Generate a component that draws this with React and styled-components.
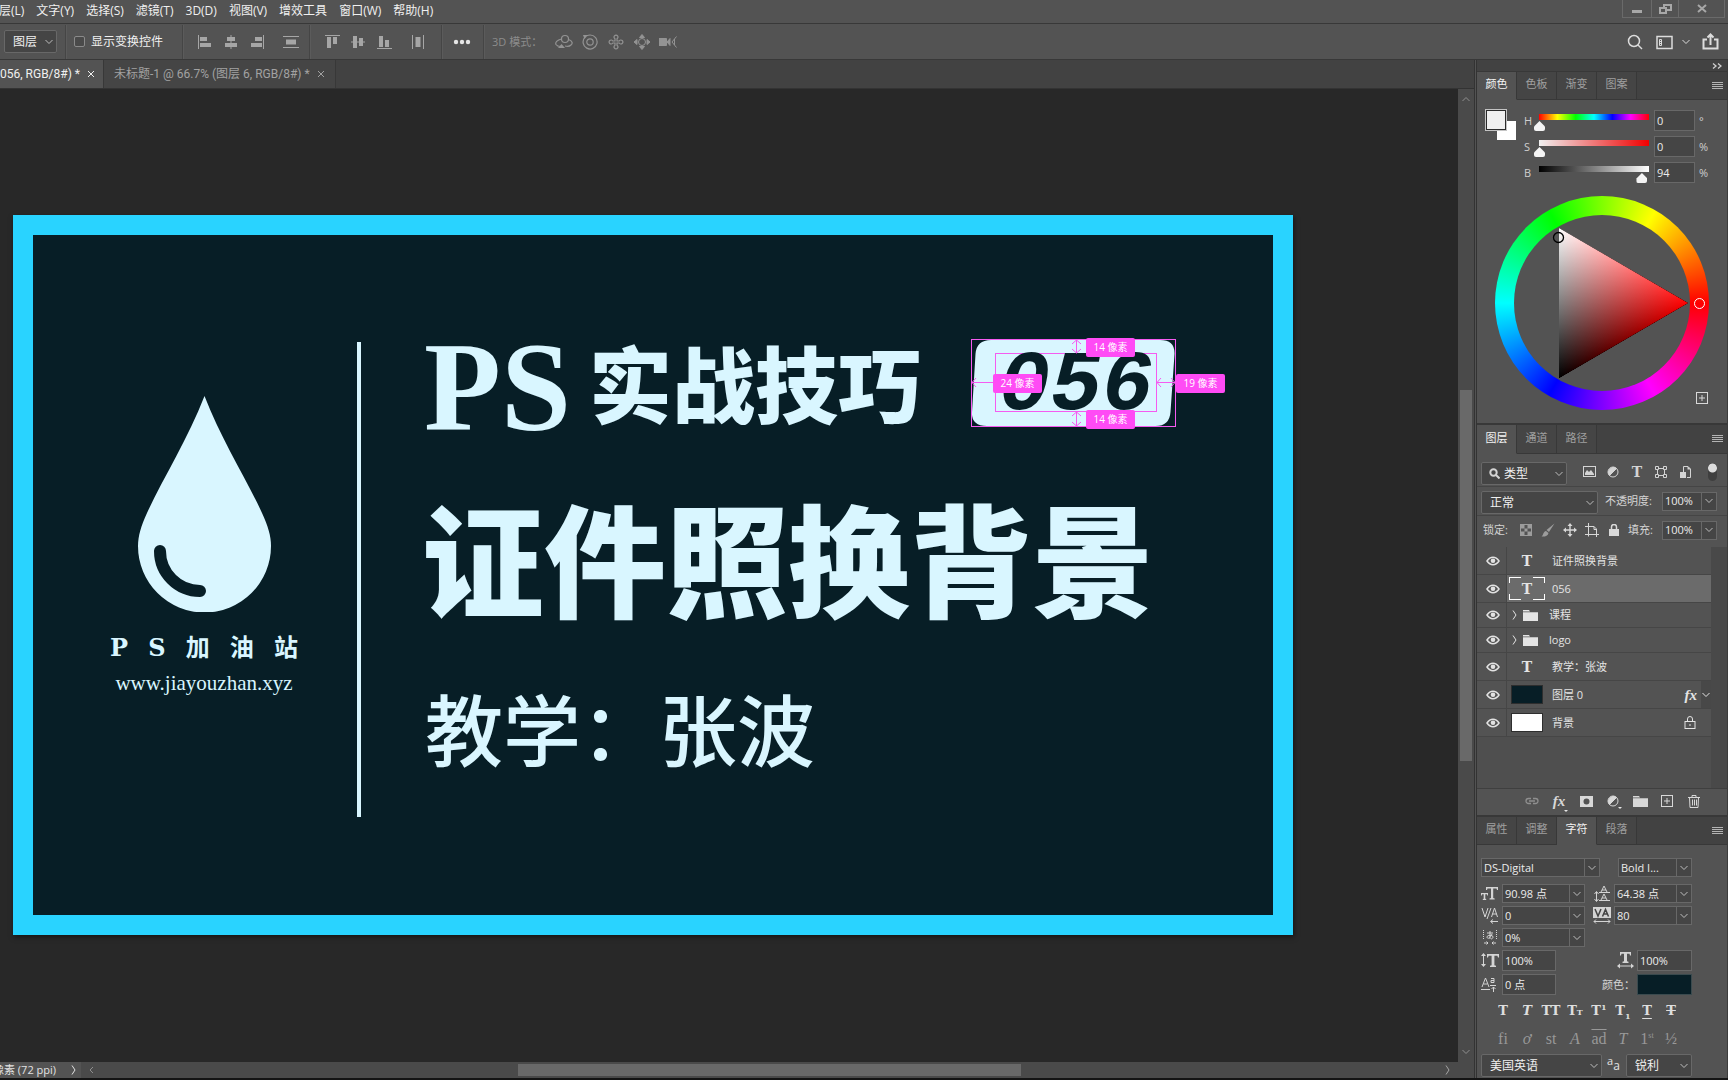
import React from 'react';
import styled, { createGlobalStyle, css } from 'styled-components';

const Global = createGlobalStyle`
  *, *::before, *::after { box-sizing: border-box; }
  body { margin: 0; background: #141414; overflow: hidden; }
  body, button, input, select {
    font-family: "Open Sans", "Noto Sans CJK SC", sans-serif;
    font-size: 11px;
    line-height: 16px;
    color: #e2e2e2;
  }
  button { background: none; border: 0; padding: 0; margin: 0; }
  input, select { margin: 0; outline: none; border-radius: 0; }
  svg { display: block; flex: none; }
`;

/* ---------- shell ---------- */

const Shell = styled.div`
  display: flex;
  flex-direction: column;
  height: 100vh;
  border-bottom: 2px solid #141414;
  background: #535353;
  overflow: hidden;
`;

const MenuBar = styled.header`
  display: flex;
  justify-content: space-between;
  height: 24px;
  flex: none;
  border-bottom: 1px solid #383838;
`;

const Menus = styled.nav`
  display: flex;
  align-items: flex-start;
  gap: 12px;
  padding-top: 3px;
  margin-left: -1px;
`;

const MenuItem = styled.button`
  font-size: 12px;
  color: #f0f0f0;
  white-space: nowrap;
`;

const WindowButtons = styled.div`
  display: flex;
  height: 18px;
  margin-right: 3px;
  border: 1px solid #6a6a6a;
  border-top: 0;
`;

const WindowButton = styled.button`
  display: grid;
  place-items: center;
  width: ${(p) => p.$w}px;
  color: #a8a8a8;
  & + & { border-left: 1px solid #6a6a6a; }
`;

const OptionsBar = styled.div`
  display: flex;
  align-items: center;
  height: 36px;
  flex: none;
  padding: 0 9px 0 4px;
  border-bottom: 1px solid #383838;
`;

const Separator = styled.i`
  width: 1px;
  height: 34px;
  flex: none;
  background: #454545;
  box-shadow: 1px 0 #5b5b5b;
`;

const CheckLabel = styled.label`
  display: flex;
  align-items: center;
  gap: 6px;
  padding: 0 19px 0 8px;
  font-size: 12px;
  color: #f0f0f0;
  white-space: nowrap;
`;

const CheckBox = styled.input`
  appearance: none;
  width: 11px;
  height: 11px;
  border: 1px solid #8a8a8a;
  border-radius: 2px;
  background: #4a4a4a;
`;

const IconGroup = styled.div`
  display: flex;
  align-items: center;
  gap: ${(p) => p.$gap || 0}px;
  padding: 0 ${(p) => p.$right || 0}px 0 ${(p) => p.$left || 0}px;
  color: ${(p) => p.$color || '#a6a6a6'};
`;

const IconButton = styled.button`
  display: grid;
  place-items: center;
  width: ${(p) => p.$w || 16}px;
  height: ${(p) => p.$h || 16}px;
  flex: none;
  color: ${(p) => p.$color || 'inherit'};
`;

const ModeLabel = styled.span`
  padding-left: 8px;
  color: #8c8c8c;
  white-space: nowrap;
`;

const Spacer = styled.span`flex: 1;`;

const Body = styled.div`
  display: flex;
  flex: 1;
  min-height: 0;
`;

/* ---------- form parts ---------- */

const SelectWrap = styled.label`
  position: relative;
  display: block;
  width: ${(p) => p.$w}px;
  height: ${(p) => p.$h || 23}px;
  flex: none;
  ${(p) => p.$low && css`
    align-self: flex-end;
    margin-bottom: 1px;
  `}
`;

const SelectBox = styled.select`
  appearance: none;
  width: 100%;
  height: 100%;
  padding: 0 16px 0 ${(p) => p.$pad || 8}px;
  border: 1px solid #686868;
  border-radius: 2px;
  background: #454545;
  font-size: 12px;
  color: #f0f0f0;
`;

const SelectArrow = styled.span`
  position: absolute;
  right: 4px;
  top: calc(50% - 3px);
  color: #bdbdbd;
  pointer-events: none;
`;

const SearchMark = styled.span`
  position: absolute;
  left: 8px;
  top: 6px;
  pointer-events: none;
`;

const Combo = styled.span`
  display: flex;
  width: ${(p) => p.$w}px;
  height: ${(p) => p.$h || 19}px;
  flex: none;
  border: 1px solid #686868;
  background: #454545;
`;

const TextInput = styled.input`
  flex: 1;
  min-width: 0;
  padding: 0 2px;
  border: 0;
  background: transparent;
  color: #ececec;
`;

const ComboArrow = styled.button`
  display: grid;
  place-items: center;
  width: 15px;
  border-left: 1px solid #686868;
  color: #bdbdbd;
`;

/* ---------- document area ---------- */

const Workspace = styled.main`
  display: flex;
  flex-direction: column;
  flex: 1;
  min-width: 0;
`;

const DocTabs = styled.div`
  display: flex;
  height: 29px;
  flex: none;
  background: #424242;
  border-bottom: 1px solid #333;
`;

const DocTab = styled.button`
  display: flex;
  align-items: center;
  gap: 7px;
  padding: 0 ${(p) => (p.$active ? 8 : 10)}px 0 ${(p) => (p.$active ? 0 : 10)}px;
  border-right: 1px solid #383838;
  background: ${(p) => (p.$active ? '#535353' : '#454545')};
  color: ${(p) => (p.$active ? '#f0f0f0' : '#a2a2a2')};
  font-family: Roboto, "Noto Sans CJK SC", sans-serif;
  font-size: 12px;
  white-space: nowrap;
`;

const CanvasRow = styled.div`
  display: flex;
  flex: 1;
  min-height: 0;
`;

const Canvas = styled.div`
  flex: 1;
  min-width: 0;
  padding: 126px 0 0 13px;
  background: #282828;
  overflow: hidden;
`;

const VScroll = styled.div`
  display: flex;
  flex-direction: column;
  align-items: center;
  justify-content: space-between;
  width: 16px;
  flex: none;
  padding: 7px 0;
  background: #4a4a4a;
  color: #8f8f8f;
`;

const VThumb = styled.i`
  width: 12px;
  flex: 0 0 371px;
  background: #696969;
`;

const FlexGap = styled.i`flex: 1 1 0;`;

const StatusBar = styled.footer`
  display: flex;
  align-items: center;
  height: 16px;
  flex: none;
  background: #4a4a4a;
  color: #8f8f8f;
  overflow: hidden;
`;

const StatusText = styled.span`
  display: flex;
  align-items: center;
  gap: 15px;
  width: 88px;
  height: 16px;
  flex: none;
  margin: 0 8px 0 -7px;
  background: #535353;
  color: #e2e2e2;
  white-space: nowrap;
`;

const HThumb = styled.i`
  height: 12px;
  flex: 0 0 503px;
  background: #696969;
`;

const Artboard = styled.section`
  display: flex;
  align-items: flex-start;
  width: 1280px;
  height: 720px;
  border: 20px solid #29d3ff;
  padding-left: 77px;
  background: #071e26;
  color: #d9f6ff;
  box-shadow: 1px 2px 5px rgba(0, 0, 0, 0.5);
`;

const Brand = styled.div`
  display: flex;
  flex-direction: column;
  align-items: center;
  width: 188px;
  padding-top: 161px;
`;

const BrandName = styled.div`
  display: flex;
  justify-content: space-between;
  align-items: center;
  width: 100%;
  height: 30px;
  margin-top: 21px;
  font: bold 24px/30px "DejaVu Serif", "Noto Sans CJK SC", serif;
`;

const BrandUrl = styled.div`
  margin-top: 8px;
  font: 21px/24px "Liberation Serif", serif;
`;

const Rule = styled.i`
  width: 4px;
  height: 475px;
  margin: 107px 63px 0 59px;
  background: #d9f6ff;
`;

const Titles = styled.div`
  padding-top: 90px;
  white-space: nowrap;
`;

const TitleLine = styled.div`
  display: flex;
  align-items: center;
  height: 120px;
`;

const Latin = styled.span`
  margin: 6px 18px 0 0;
  font: bold 126px/120px "Liberation Serif", serif;
`;

const Hanzi = styled.span`
  margin-bottom: 8px;
  font: 900 83px/110px "Noto Sans CJK SC", sans-serif;
`;

const Headline = styled.h1`
  margin: 35px 0 0 -2px;
  font: 900 122px/150px "Noto Sans CJK SC", sans-serif;
`;

const Teacher = styled.p`
  margin: 57px 0 0 1px;
  font: 500 78px/80px "Noto Sans CJK SC", sans-serif;
`;

/* ---------- number badge with its measuring guides ---------- */

const Badge = styled.div`
  position: relative;
  width: 205px;
  height: 88px;
  margin: 0 0 4px 50px;
  outline: 1px solid #f55bf0;
  outline-offset: -1px;
  color: #071e26;
`;

const BadgePlate = styled.svg`
  position: absolute;
  inset: 0;
`;

const BadgeNumber = styled.span`
  position: absolute;
  left: 24px;
  right: 19px;
  top: 14px;
  bottom: 15px;
  border: 1px solid #f55bf0;
  text-align: center;
  font: italic bold 86px/65px "Liberation Mono", monospace;
`;

const Measure = styled.span`
  position: absolute;
  left: ${(p) => p.$x}px;
  top: ${(p) => p.$y}px;
  width: 49px;
  height: 19px;
  border-radius: 2px;
  background: #ff4bf5;
  color: #fff;
  font-size: 10px;
  line-height: 19px;
  text-align: center;
`;

/* ---------- dock ---------- */

const Dock = styled.aside`
  display: flex;
  flex-direction: column;
  width: 254px;
  flex: none;
  border-left: 3px double #333;
  border-right: 1px solid #3c3c3c;
`;

const Collapse = styled.div`
  display: flex;
  justify-content: flex-end;
  align-items: center;
  height: 12px;
  flex: none;
  padding-right: 5px;
  background: #424242;
  border-bottom: 1px solid #383838;
  color: #d0d0d0;
`;

const PanelTabs = styled.div`
  display: flex;
  height: ${(p) => p.$h || 28}px;
  flex: none;
  background: #424242;
  border-top: ${(p) => (p.$line ? 2 : 0)}px solid #383838;
`;

const PanelTab = styled.button`
  width: 40px;
  border-right: 1px solid #383838;
  border-bottom: 1px solid ${(p) => (p.$active ? '#535353' : '#383838')};
  background: ${(p) => (p.$active ? '#535353' : '#454545')};
  color: ${(p) => (p.$active ? '#f4f4f4' : '#a0a0a0')};
  padding-bottom: 3px;
`;

const PanelMenu = styled.button`
  display: flex;
  flex: 1;
  align-items: center;
  justify-content: flex-end;
  padding-right: 4px;
  border-bottom: 1px solid #383838;
  color: #b4b4b4;
`;

const ColorPanel = styled.section`
  flex: none;
  padding: 10px 0 13px;
`;

const ColorControls = styled.div`
  display: flex;
  padding-left: 9px;
`;

const Swatches = styled.div`
  position: relative;
  width: 38px;
  height: 31px;
  flex: none;
`;

const Swatch = styled.button`
  position: absolute;
  left: ${(p) => (p.$back ? 11 : 0)}px;
  top: ${(p) => (p.$back ? 11 : 0)}px;
  width: ${(p) => (p.$back ? 19 : 20)}px;
  height: ${(p) => (p.$back ? 19 : 20)}px;
  border: ${(p) => (p.$back ? 'none' : '1px solid #2b2b2b')};
  background: ${(p) => (p.$back ? '#fff' : '#f0f0f0')};
  box-shadow: ${(p) => (p.$back ? 'none' : '0 0 0 1px #c4c4c4')};
`;

const Sliders = styled.div`
  display: grid;
  gap: 5px;
`;

const SliderRow = styled.div`
  display: flex;
  align-items: center;
  height: 21px;
`;

const SliderName = styled.label`
  width: 10px;
  color: #cfcfcf;
`;

const Range = styled.input`
  appearance: none;
  width: 120px;
  height: 21px;
  background: ${(p) => p.$track} 5px 4px / 110px 6px no-repeat;
  &::-webkit-slider-runnable-track { height: 21px; }
  &::-webkit-slider-thumb {
    appearance: none;
    width: 11px;
    height: 10px;
    margin-top: 11px;
    background: #f4f4f4;
    border-radius: 2px;
    clip-path: polygon(50% 0, 100% 55%, 100% 100%, 0 100%, 0 55%);
  }
`;

const Unit = styled.span`
  width: 20px;
  padding-left: 4px;
  color: #cfcfcf;
`;

const Wheel = styled.div`
  position: relative;
  display: grid;
  place-items: center;
  width: 214px;
  height: 214px;
  margin: 13px 0 0 18px;
  border-radius: 50%;
  background: conic-gradient(from 90deg, #f00, #f0f, #00f, #0ff, #0f0, #ff0, #f00);
`;

const WheelHole = styled.i`
  width: 176px;
  height: 176px;
  border-radius: 50%;
  background: #535353;
`;

const WheelDrawing = styled.svg`
  position: absolute;
  inset: 0;
  isolation: isolate;
`;

const AddSwatch = styled.button`
  position: absolute;
  left: 201px;
  top: 196px;
  color: #d8d8d8;
`;

const LayersPanel = styled.section`
  display: flex;
  flex-direction: column;
  flex: 1;
  min-height: 0;
`;

const ToolRow = styled.div`
  display: flex;
  align-items: center;
  height: ${(p) => p.$h}px;
  flex: none;
  padding: ${(p) => p.$top || 0}px 10px ${(p) => p.$bottom || 0}px 4px;
  border-bottom: ${(p) => (p.$last ? 0 : 1)}px solid #454545;
  color: #d4d4d4;
`;

const FieldLabel = styled.label`
  margin: 0 ${(p) => p.$right ?? 5}px 0 ${(p) => p.$left ?? 0}px;
  white-space: nowrap;
  color: #d4d4d4;
`;

const FilterToggle = styled.button`
  width: 9px;
  height: 18px;
  margin-left: auto;
  border-radius: 5px;
  background: radial-gradient(circle at 50% 5px, #dcdcdc 4px, #3f3f3f 5px);
`;

const LayerArea = styled.div`
  display: flex;
  flex: 1;
  min-height: 0;
  background: #4d4d4d;
  border-bottom: 1px solid #3f3f3f;
`;

const LayerList = styled.ul`
  flex: 1;
  margin: 0;
  padding: 0;
  list-style: none;
  background: #4f4f4f;
`;

const LayerTrack = styled.i`
  width: 16px;
  background: #494949;
`;

const LayerRow = styled.li`
  display: flex;
  align-items: center;
  height: ${(p) => (p.$folder ? 25 : 28)}px;
  border-bottom: 1px solid #464646;
  background: linear-gradient(90deg, #535353 29px, #464646 29px, #464646 30px, ${(p) => (p.$selected ? '#6b6b6b' : '#535353')} 30px);
  color: #e4e4e4;
`;

const EyeButton = styled.button`
  display: grid;
  place-items: center;
  width: 31px;
  height: 100%;
`;

const LayerIcon = styled.span`
  display: flex;
  align-items: center;
  gap: 4px;
  width: ${(p) => (p.$folder ? 41 : 44)}px;
  height: 100%;
  padding-left: ${(p) => (p.$inset ? 3 : 1)}px;
`;

const FolderToggle = styled.span`
  display: grid;
  place-items: center;
  width: 10px;
`;

const TypeMark = styled.span`
  display: grid;
  place-items: center;
  width: ${(p) => p.$w || 36}px;
  height: 23px;
  font: bold 14px/20px "DejaVu Serif", serif;
  ${(p) => p.$framed && css`
    background:
      linear-gradient(#fff, #fff) 0 0 / 12px 1px, linear-gradient(#fff, #fff) 100% 0 / 12px 1px,
      linear-gradient(#fff, #fff) 0 100% / 12px 1px, linear-gradient(#fff, #fff) 100% 100% / 12px 1px,
      linear-gradient(#fff, #fff) 0 0 / 1px 6px, linear-gradient(#fff, #fff) 100% 0 / 1px 6px,
      linear-gradient(#fff, #fff) 0 100% / 1px 6px, linear-gradient(#fff, #fff) 100% 100% / 1px 6px;
    background-repeat: no-repeat;
  `}
`;

const Thumb = styled.i`
  width: 32px;
  height: 19px;
  border: 1px solid #2e2e2e;
  background: ${(p) => p.$color};
`;

const LayerName = styled.span`
  flex: 1;
  white-space: nowrap;
`;

const FxMark = styled.span`
  font: italic bold 15px/16px "Liberation Serif", serif;
`;

const RowArrow = styled.button`
  display: grid;
  place-items: center;
  width: 10px;
  height: 100%;
  margin-left: 4px;
  background: #484848;
`;

const LayerFooter = styled.div`
  display: flex;
  align-items: center;
  height: 26px;
  flex: none;
  gap: 11px;
  padding: 0 26px 2px 47px;
  color: #d8d8d8;
`;

const DropMark = styled.span`
  position: relative;
  display: block;
  &::after {
    content: '';
    position: absolute;
    right: -3px;
    bottom: -2px;
    border: 2px solid transparent;
    border-top-color: #e6e6e6;
    border-bottom: 0;
  }
`;

const CharPanel = styled.section`
  flex: none;
  padding: 13px 35px 0 4px;
`;

const CharRow = styled.div`
  display: flex;
  align-items: center;
  justify-content: space-between;
  height: ${(p) => p.$h || 19}px;
  margin-bottom: ${(p) => p.$gap ?? 3}px;
`;

const CharField = styled.div`
  display: flex;
  align-items: center;
  gap: ${(p) => p.$gap ?? 3}px;
  color: #d4d4d4;
`;

const ColorChip = styled.button`
  width: 55px;
  height: 21px;
  border: 1px solid #3a4a4e;
  background: #071e26;
`;

const StyleGrid = styled.div`
  display: grid;
  grid-template-columns: repeat(8, 24px);
  height: 28px;
  padding-left: 10px;
`;

const StyleButton = styled.button`
  font-family: "DejaVu Serif", serif;
  font-size: 13px;
  font-weight: ${(p) => (p.$off ? 400 : 700)};
  font-style: ${(p) => (p.$italic ? 'italic' : 'normal')};
  text-decoration: ${(p) => p.$line || 'none'};
  text-underline-offset: 3px;
  color: ${(p) => (p.$off ? '#989898' : '#dedede')};
  white-space: nowrap;
  ${(p) => p.$off && css`font-family: "Liberation Serif", serif; font-size: 16px;`}
  sup, sub, small { font-size: 8px; line-height: 0; }
`;

const AaMark = styled.span`
  flex: 1;
  padding-left: 5px;
  font-size: 12px;
  sup { font-size: 11px; line-height: 0; }
`;

/* ---------- icons ---------- */

const Icon = ({ w = 16, h = 16, children, sw = 1, fill = 'none' }) => (
  <svg width={w} height={h} viewBox={`0 0 ${w} ${h}`} fill={fill} stroke={fill === 'none' ? 'currentColor' : 'none'} strokeWidth={sw} aria-hidden="true">
    {children}
  </svg>
);

const Chevron = () => <Icon w={8} h={6}><path d="M.500 1l3.500 3.500 3.500-3.500" /></Icon>;
const ChevronUp = () => <Icon w={8} h={6}><path d="M.500 5l3.500-3.500 3.500 3.500" /></Icon>;
const ChevronRight = () => <Icon w={5} h={10}><path d="M1 .500l3 4.500-3 4.500" /></Icon>;
const ChevronLeft = () => <Icon w={5} h={8}><path d="M4 1L1 4l3 3" /></Icon>;
const Close = () => <Icon w={8} h={8}><path d="M1 1l6 6M7 1L1 7" /></Icon>;
const Burger = () => <Icon w={11} h={8}><path d="M0 .5h11M0 2.500h11M0 4.500h11M0 6.500h11" /></Icon>;
const Eye = () => (
  <Icon w={14} h={10}>
    <path d="M1 5C3 2 5 1.200 7 1.200S11 2 13 5C11 8 9 8.800 7 8.800S3 8 1 5z" strokeWidth="1.500" />
    <circle cx="7" cy="4.800" r="2.300" fill="currentColor" stroke="none" />
  </Icon>
);
const Folder = () => <Icon w={15} h={12} fill="currentColor"><path d="M0 1h6l1 1.500H0zM0 3.200h15V12H0z" /></Icon>;
const Lock = () => <Icon w={12} h={13}><rect x="1" y="5.500" width="10" height="7" /><path d="M3.500 5.500V3a2.500 2.500 0 0 1 5 0v2.500M6 8v2" /></Icon>;
const HalfCircle = () => <Icon w={12} h={12}><circle cx="6" cy="6" r="5" /><path d="M9.500 2.500A5 5 0 0 0 2.500 9.500z" fill="currentColor" /></Icon>;
const PlusBox = () => <Icon w={12} h={12}><rect x=".5" y=".5" width="11" height="11" /><path d="M6 3v6M3 6h6" /></Icon>;

const alignIcons = {
  left: <path d="M1 1h1v14H1zM3 3h7v4H3zM3 9h11v4H3z" />,
  center: <path d="M7.500 1h1v14h-1zM4 3h8v4H4zM2 9h12v4H2z" />,
  right: <path d="M14 1h1v14h-1zM6 3h7v4H6zM2 9h11v4H2z" />,
  spreadV: <path d="M0 2h16v1H0zM3 5.500h10v5H3zM0 13h16v1H0z" />,
  top: <path d="M1 1h15v1H1zM3 3h4v11H3zM9 3h4v7H9z" />,
  middle: <path d="M1 7.500h14v1H1zM3 2h4v12H3zM9 4h4v8H9z" />,
  bottom: <path d="M1 14h15v1H1zM3 2h4v11H3zM9 6h4v7H9z" />,
  spreadH: <path d="M2 1h1v14H2zM5.500 3h5v10h-5zM13 1h1v14h-1z" />,
};

const Align = ({ kind }) => (
  <IconButton aria-label={kind}><Icon fill="currentColor">{alignIcons[kind]}</Icon></IconButton>
);

const Select = ({ label, value, w, h, pad, low }) => (
  <SelectWrap $w={w} $h={h} $low={low}>
    <SelectBox aria-label={label} defaultValue={value} $pad={pad}><option>{value}</option></SelectBox>
    <SelectArrow><Chevron /></SelectArrow>
  </SelectWrap>
);

const ComboField = ({ id, label, value, w, h, plain }) => (
  <Combo $w={w} $h={h}>
    <TextInput id={id} aria-label={label} defaultValue={value} />
    {!plain && <ComboArrow aria-label={label + ' ▾'}><Chevron /></ComboArrow>}
  </Combo>
);

const Tabs = ({ names, active, h, line }) => (
  <PanelTabs $h={h} $line={line} role="tablist">
    {names.map((n) => <PanelTab key={n} role="tab" aria-selected={n === active} $active={n === active}>{n}</PanelTab>)}
    <PanelMenu aria-label="menu"><Burger /></PanelMenu>
  </PanelTabs>
);

/* ---------- data ---------- */

const menus = ['层(L)', '文字(Y)', '选择(S)', '滤镜(T)', '3D(D)', '视图(V)', '增效工具', '窗口(W)', '帮助(H)'];

const hsb = [
  { name: 'H', value: 0, max: 360, unit: '°', track: 'linear-gradient(90deg,#f00,#ff0,#0f0,#0ff,#00f,#f0f,#f00)' },
  { name: 'S', value: 0, max: 100, unit: '%', track: 'linear-gradient(90deg,#f0f0f0,#f00000)' },
  { name: 'B', value: 94, max: 100, unit: '%', track: 'linear-gradient(90deg,#000,#fff)' },
];

const layers = [
  { name: '证件照换背景', type: 'text' },
  { name: '056', type: 'text', selected: true },
  { name: '课程', type: 'folder' },
  { name: 'logo', type: 'folder' },
  { name: '教学：张波', type: 'text' },
  { name: '图层 0', type: 'pixel', color: '#071e26', fx: true },
  { name: '背景', type: 'pixel', color: '#fff', locked: true },
];

/* ---------- sections ---------- */

function Options() {
  return (
    <OptionsBar>
      <Select label="自动选择" value="图层" w={53} />
      <IconGroup $left={8}><Separator /></IconGroup>
      <CheckLabel><CheckBox type="checkbox" />显示变换控件</CheckLabel>
      <Separator />
      <IconGroup $gap={10} $left={14} $right={10}>
        <Align kind="left" /><Align kind="center" /><Align kind="right" />
        <IconGroup $left={8}><Align kind="spreadV" /></IconGroup>
      </IconGroup>
      <Separator />
      <IconGroup $gap={10} $left={14} $right={15}>
        <Align kind="top" /><Align kind="middle" /><Align kind="bottom" />
        <IconGroup $left={8}><Align kind="spreadH" /></IconGroup>
      </IconGroup>
      <Separator />
      <IconGroup $left={11} $right={12} $color="#e6e6e6">
        <IconButton aria-label="more" $w={18}><Icon w={18} fill="currentColor"><circle cx="3" cy="8" r="2.200" /><circle cx="9" cy="8" r="2.200" /><circle cx="15" cy="8" r="2.200" /></Icon></IconButton>
      </IconGroup>
      <Separator />
      <ModeLabel>3D 模式：</ModeLabel>
      <IconGroup $gap={8} $left={13} $color="#939393">
        <IconButton $w={18} aria-label="orbit"><Icon w={18} sw={1.2}><circle cx="10" cy="5" r="3.500" /><path d="M6.500 5C2 6 0 8.500 1 10.500c1 1.500 3 2 4.500 2M13.500 5.500c4 1.500 4.500 4 2.500 5.500-1.500 1.500-4 1.500-6 1" /><path d="M3 14h7l-3.500-4z" fill="currentColor" stroke="none" /></Icon></IconButton>
        <IconButton $w={18} aria-label="roll"><Icon w={18} sw={1.2}><circle cx="9" cy="8" r="3.200" /><path d="M4 3.200A7 7 0 1 0 9 1c-1.200 0-2.200.300-3 .8" /><path d="M2 1l5 0-3.500 4z" fill="currentColor" stroke="none" /></Icon></IconButton>
        <IconButton $w={18} aria-label="pan"><Icon w={18} sw={1.2}><path d="M8 7V4.800a2 2 0 1 1 2 0V7h2.200a2 2 0 1 1 0 2H10v2.200a2 2 0 1 1-2 0V9H5.800a2 2 0 1 1 0-2z" /></Icon></IconButton>
        <IconButton $w={18} aria-label="slide"><Icon w={18}><circle cx="9" cy="8" r="3.500" /><path d="M9 .500l2.500 3h-5zM9 15.500l2.500-3h-5zM1 8l3-2.500v5zM17 8l-3-2.500v5z" fill="currentColor" /></Icon></IconButton>
        <IconButton $w={18} aria-label="camera"><Icon w={18}><path d="M0 4.500h7.500v7H0zM8 8l3-3.500v7z" fill="currentColor" /><path d="M17.500 2.500L13 8l4.500 5.500M15.500 5v6" /></Icon></IconButton>
      </IconGroup>
      <Spacer />
      <IconGroup $gap={12} $color="#dcdcdc">
        <IconButton aria-label="search"><Icon sw={1.5}><circle cx="7" cy="7" r="5.500" /><path d="M11 11l4 4" /></Icon></IconButton>
        <IconGroup $gap={9} $left={1} $color="#dcdcdc">
          <IconButton aria-label="workspace" $w={17}><Icon w={17}><rect x="1" y="2.500" width="15" height="12" strokeWidth="1.500" /><path d="M3.500 5.500h2v6h-2zM3.500 7.500h2M3.500 9.500h2" /></Icon></IconButton>
          <Chevron />
        </IconGroup>
        <IconButton aria-label="share" $w={17} $h={17}><Icon w={17} h={17} sw={2}><path d="M5 6.500H1.500v9h14v-9H12M8.500 12V2M5.500 4.500l3-3 3 3" /></Icon></IconButton>
      </IconGroup>
    </OptionsBar>
  );
}

function Document() {
  return (
    <Artboard>
      <Brand>
        <svg width="133" height="216" viewBox="0 0 133 216">
          <path d="M66.500 0C83 43 109 84 124 117c6 13 9 23 9 33a66.500 66.500 0 0 1-133 0c0-10 3-20 9-33C24 84 50 43 66.500 0z" fill="#d9f6ff" />
          <path d="M22 155a40 40 0 0 0 40 40" fill="none" stroke="#071e26" strokeWidth="12" strokeLinecap="round" />
        </svg>
        <BrandName>{[...'PS加油站'].map((c) => <span key={c}>{c}</span>)}</BrandName>
        <BrandUrl>www.jiayouzhan.xyz</BrandUrl>
      </Brand>
      <Rule />
      <Titles>
        <TitleLine>
          <Latin>PS</Latin>
          <Hanzi>实战技巧</Hanzi>
          <Badge>
            <BadgePlate width="205" height="88" viewBox="0 0 205 88">
              <path d="M20 1h169q15 0 14.500 14l-4 58q-1 14-15 14H16Q0 87 1 73l3.500-58Q5.500 1 20 1z" fill="#d9f6ff" />
            </BadgePlate>
            <BadgeNumber>056</BadgeNumber>
            <BadgePlate width="205" height="88" viewBox="0 0 205 88" fill="none" stroke="#f55bf0">
              <path d="M105.500 1v13M101 5l4.500-4 4.500 4M101 10l4.500 4 4.500-4" />
              <path d="M105.500 73v14M101 77l4.500-4 4.500 4M101 83l4.500 4 4.500-4" />
              <path d="M1 43.500h22M5 39l-4 4.500 4 4.500" />
              <path d="M186 43.500h18M190 39l-4 4.500 4 4.500M200 39l4 4.500-4 4.500" />
            </BadgePlate>
            <Measure $x={115} $y={-1}>14 像素</Measure>
            <Measure $x={22} $y={35}>24 像素</Measure>
            <Measure $x={205} $y={35}>19 像素</Measure>
            <Measure $x={115} $y={71}>14 像素</Measure>
          </Badge>
        </TitleLine>
        <Headline>证件照换背景</Headline>
        <Teacher>教学：张波</Teacher>
      </Titles>
    </Artboard>
  );
}

function ColorSection() {
  return (
    <ColorPanel>
      <ColorControls>
        <Swatches><Swatch $back aria-label="背景色" /><Swatch aria-label="前景色" /></Swatches>
        <Sliders>
          {hsb.map((s) => (
            <SliderRow key={s.name}>
              <SliderName htmlFor={'r' + s.name}>{s.name}</SliderName>
              <Range id={'r' + s.name} type="range" min="0" max={s.max} defaultValue={s.value} $track={s.track} />
              <ComboField label={s.name} value={String(s.value)} w={41} h={21} plain />
              <Unit>{s.unit}</Unit>
            </SliderRow>
          ))}
        </Sliders>
      </ColorControls>
      <Wheel>
        <WheelHole />
        <WheelDrawing width="214" height="214" viewBox="0 0 214 214">
          <defs>
            <linearGradient id="white" gradientUnits="userSpaceOnUse" x1="128.500" y1="144.500" x2="64" y2="32">
              <stop offset="0" stopColor="#000" /><stop offset="1" stopColor="#fff" />
            </linearGradient>
            <linearGradient id="hue" gradientUnits="userSpaceOnUse" x1="64" y1="0" x2="193" y2="0">
              <stop offset="0" stopColor="#000" /><stop offset="1" stopColor="#f00" />
            </linearGradient>
          </defs>
          <path d="M64 32v150l129-75z" fill="url(#white)" />
          <path d="M64 32v150l129-75z" fill="url(#hue)" style={{ mixBlendMode: 'plus-lighter' }} />
          <circle cx="63.500" cy="41.500" r="5" fill="none" stroke="#000" strokeWidth="1.300" />
          <circle cx="204.500" cy="107.500" r="5" fill="none" stroke="#fff" />
        </WheelDrawing>
        <AddSwatch aria-label="添加到色板"><PlusBox /></AddSwatch>
      </Wheel>
    </ColorPanel>
  );
}

function Layer({ layer }) {
  const folder = layer.type === 'folder';
  return (
    <LayerRow $folder={folder} $selected={layer.selected}>
      <EyeButton aria-label="可见性"><Eye /></EyeButton>
      <LayerIcon $folder={folder} $inset={layer.type === 'pixel'}>
        {folder && <><FolderToggle><ChevronRight /></FolderToggle><Folder /></>}
        {layer.type === 'text' && <TypeMark $framed={layer.selected}>T</TypeMark>}
        {layer.type === 'pixel' && <Thumb $color={layer.color} />}
      </LayerIcon>
      <LayerName>{layer.name}</LayerName>
      {layer.fx && <><FxMark>fx</FxMark><RowArrow aria-label="效果"><Chevron /></RowArrow></>}
      {layer.locked && <IconButton $w={42} aria-label="锁定"><Lock /></IconButton>}
    </LayerRow>
  );
}

function LayersSection() {
  return (
    <LayersPanel>
      <ToolRow $h={33} $top={3}>
        <SelectWrap $w={86} $low>
          <SelectBox aria-label="类型" $pad={22}><option>类型</option></SelectBox>
          <SearchMark><Icon w={11} h={11} sw={2}><circle cx="4.500" cy="4.500" r="3.200" /><path d="M7 7l3.500 3.500" /></Icon></SearchMark>
          <SelectArrow><Chevron /></SelectArrow>
        </SelectWrap>
        <IconGroup $gap={8} $left={14} $color="#d4d4d4">
          <IconButton aria-label="像素"><Icon w={13} h={11}><rect x=".5" y=".5" width="12" height="10" /><path d="M2 9V7l2-3 2 2 2-2 3 4v1z" fill="currentColor" stroke="none" /></Icon></IconButton>
          <IconButton aria-label="调整"><HalfCircle /></IconButton>
          <IconButton aria-label="文字" $h={23}><TypeMark $w={16}>T</TypeMark></IconButton>
          <IconButton aria-label="形状"><Icon w={12} h={12}><path d="M2.500 2.500h7v7h-7z" /><path d="M.5.5h3v3h-3zM8.500.5h3v3h-3zM.5 8.500h3v3h-3zM8.500 8.500h3v3h-3z" fill="#535353" /></Icon></IconButton>
          <IconButton aria-label="智能对象"><Icon w={11} h={12}><path d="M3.500 6V.5H8l2.500 2.500v8.500H7" /><path d="M7.500 0v3.500H11M0 6h6v6H0z" fill="currentColor" stroke="none" /></Icon></IconButton>
        </IconGroup>
        <FilterToggle aria-label="过滤开关" />
      </ToolRow>
      <ToolRow $h={29}>
        <Select label="混合模式" value="正常" w={117} low />
        <FieldLabel htmlFor="opacity" $left={7}>不透明度:</FieldLabel>
        <Spacer />
        <ComboField id="opacity" label="不透明度" value="100%" w={55} />
      </ToolRow>
      <ToolRow $h={31} $bottom={3} $last>
        <FieldLabel $left={2} $right={10}>锁定:</FieldLabel>
        <IconGroup $gap={6} $color="#d8d8d8">
          <IconButton aria-label="透明像素" $color="#9c9c9c"><Icon w={12} h={12}><rect x=".5" y=".5" width="11" height="11" /><path d="M1 1h3.500v3.500H1zM7.500 1H11v3.500H7.500zM4.500 4.500h3v3h-3zM1 7.500h3.500V11H1zM7.500 7.500H11V11H7.500z" fill="currentColor" stroke="none" /></Icon></IconButton>
          <IconButton aria-label="图像像素" $color="#9c9c9c"><Icon w={14} h={14} fill="currentColor"><path d="M13.500.5L8 9 5.500 7zM5 8l2.500 2c-.5 3-4 4-7 3.500 2-1 1.500-5 4.500-5.500z" /></Icon></IconButton>
          <IconButton aria-label="位置"><Icon w={14} h={14} fill="currentColor"><path d="M7 0l2.500 3H7.700v3.300H11V4.500L14 7l-3 2.500V7.700H7.700V11h1.800L7 14l-2.500-3h1.800V7.700H3v1.800L0 7l3-2.500v1.800h3.300V3H4.500z" /></Icon></IconButton>
          <IconButton aria-label="画板"><Icon w={14} h={14}><path d="M3.500 0v13.500M0 3.500h9l2.500 2.500v8M0 11.500h14M9 3.500v3h3" /></Icon></IconButton>
          <IconButton aria-label="全部"><Icon w={10} h={12}><path d="M0 5h10v7H0z" fill="currentColor" stroke="none" /><path d="M2.500 5V3a2.500 2.500 0 0 1 5 0v2" strokeWidth="1.500" /></Icon></IconButton>
        </IconGroup>
        <FieldLabel htmlFor="fill" $left={6}>填充:</FieldLabel>
        <Spacer />
        <ComboField id="fill" label="填充" value="100%" w={55} />
      </ToolRow>
      <LayerArea>
        <LayerList>{layers.map((l) => <Layer key={l.name} layer={l} />)}</LayerList>
        <LayerTrack />
      </LayerArea>
      <LayerFooter>
        <IconButton aria-label="链接" $color="#8f8f8f"><Icon w={14} h={8}><path d="M6 1.500H3.500a2.500 2.500 0 0 0 0 5H6M8 1.500h2.500a2.500 2.500 0 0 1 0 5H8M4 4h6" strokeWidth="1.300" /></Icon></IconButton>
        <IconButton aria-label="图层样式"><DropMark><FxMark>fx</FxMark></DropMark></IconButton>
        <IconButton aria-label="蒙版"><Icon w={13} h={11} fill="currentColor"><path fillRule="evenodd" d="M0 0h13v11H0zM6.500 2.500a3 3 0 1 0 0 6 3 3 0 0 0 0-6z" /></Icon></IconButton>
        <IconButton aria-label="调整图层"><DropMark><HalfCircle /></DropMark></IconButton>
        <IconButton aria-label="新建组"><Folder /></IconButton>
        <IconButton aria-label="新建图层"><PlusBox /></IconButton>
        <IconButton aria-label="删除"><Icon w={12} h={13}><path d="M0 2.500h12M4 2V.5h4V2M1.500 2.500l.5 10h8l.5-10M4.500 4.500v6M6.500 4.500v6M8.500 4.500v6" /></Icon></IconButton>
      </LayerFooter>
    </LayersPanel>
  );
}

const SizeIcon = () => <Icon w={18} h={15} fill="currentColor"><path d="M5 1h12v3h-1l-.5-1.500h-3.300v9.500l1.500.5v1H8.500v-1l1.500-.5V2.500H6.500L6 4H5zM0 7h7v2.500h-.8L6 8.200H4.300v4.600l.9.300v.9H1.800v-.9l.9-.3V8.200H1L.8 9.500H0z" /></Icon>;
const LeadingIcon = () => <Icon w={17} h={17}><path d="M2.500 7v9M.5 9l2-2.500L4.500 9M.5 14l2 2.500 2-2.500M7 7l3-6 3 6M8 5h4M7 15l3-6 3 6M8 13h4M5 7.500h11M5 15.500h11" /></Icon>;
const KernIcon = () => <Icon w={18} h={17}><path d="M1 1l3 9 3-9M10 1L6 12M10.500 10l3-9 3 9M11.500 7h4M17 14.500h-7M12 12.500l-2.500 2 2.500 2" /></Icon>;
const TrackIcon = () => <Icon w={18} h={17}><path d="M0 0h18v11H0z" fill="currentColor" stroke="none" /><path d="M2 2l3 7 3-7M9.500 9.500l3-7 3 7M10.500 7h4" stroke="#454545" strokeWidth="1.500" /><path d="M1 14.500h16M3 12.500l-2 2 2 2M15 12.500l2 2-2 2" /></Icon>;
const TsumeIcon = () => <Icon w={14} h={15}><path d="M.5 0v10M13.500 0v10" strokeDasharray="1 1" /><path d="M4 3h6M7 1v8M9 4c-2 5-5 5-5 3s6-2.500 6 0c0 1-1 2-2 2M1 13h4M3.500 11.500L5 13l-1.500 1.500M13 13H9M10.500 11.500L9 13l1.500 1.500" /></Icon>;
const VScaleIcon = () => <Icon w={18} h={15} fill="currentColor"><path d="M6 1h12v3.500h-1l-.6-1.800h-3v9.600l1.600.5V14H9v-1.200l1.600-.5V2.700h-3L7 4.500H6zM2.500 0L5 3H3v8h2l-2.500 3L0 11h2V3H0z" /></Icon>;
const HScaleIcon = () => <Icon w={17} h={17} fill="currentColor"><path d="M3 0h11v3.500h-1l-.5-1.800H10v7.600l1.500.5V11h-6V9.800l1.500-.5V1.700H4.500L4 3.500H3zM0 14l3-2.500v2h11v-2l3 2.500-3 2.500v-2H3v2z" /></Icon>;
const BaselineIcon = () => <Icon w={16} h={15}><path d="M1 10l3.500-9L8 10M2.500 7h4M0 12.500h9M10 1.500h3v4h-3v-2h3M9 8.500h6M12.500 15v-5M10.500 12l2-2 2 2" /></Icon>;

function CharacterSection() {
  return (
    <CharPanel>
      <CharRow $gap={7}>
        <ComboField label="字体" value="DS-Digital" w={119} />
        <ComboField label="字体样式" value="Bold I..." w={74} />
      </CharRow>
      <CharRow>
        <CharField><SizeIcon /><ComboField label="字号" value="90.98 点" w={83} /></CharField>
        <CharField><LeadingIcon /><ComboField label="行距" value="64.38 点" w={78} /></CharField>
      </CharRow>
      <CharRow>
        <CharField><KernIcon /><ComboField label="字距微调" value="0" w={83} /></CharField>
        <CharField><TrackIcon /><ComboField label="字距" value="80" w={78} /></CharField>
      </CharRow>
      <CharRow>
        <CharField $gap={5}><IconGroup $left={2} $color="#d4d4d4"><TsumeIcon /></IconGroup><ComboField label="比例间距" value="0%" w={83} /></CharField>
      </CharRow>
      <CharRow $h={21}>
        <CharField><VScaleIcon /><ComboField label="垂直缩放" value="100%" w={54} h={21} plain /></CharField>
        <CharField><HScaleIcon /><ComboField label="水平缩放" value="100%" w={55} h={21} plain /></CharField>
      </CharRow>
      <CharRow $h={21} $gap={2}>
        <CharField $gap={5}><BaselineIcon /><ComboField label="基线偏移" value="0 点" w={54} h={21} plain /></CharField>
        <CharField $gap={0}><FieldLabel $right={2}>颜色：</FieldLabel><ColorChip aria-label="颜色" /></CharField>
      </CharRow>
      <StyleGrid>
        <StyleButton>T</StyleButton>
        <StyleButton $italic>T</StyleButton>
        <StyleButton>TT</StyleButton>
        <StyleButton>T<small>T</small></StyleButton>
        <StyleButton>T<sup>1</sup></StyleButton>
        <StyleButton>T<sub>1</sub></StyleButton>
        <StyleButton $line="underline">T</StyleButton>
        <StyleButton $line="line-through">T</StyleButton>
      </StyleGrid>
      <StyleGrid>
        <StyleButton $off>fi</StyleButton>
        <StyleButton $off $italic>ơ</StyleButton>
        <StyleButton $off>st</StyleButton>
        <StyleButton $off $italic>A</StyleButton>
        <StyleButton $off $line="overline">ad</StyleButton>
        <StyleButton $off $italic>T</StyleButton>
        <StyleButton $off>1<sup>st</sup></StyleButton>
        <StyleButton $off>½</StyleButton>
      </StyleGrid>
      <CharRow $h={25} $gap={0}>
        <Select label="语言" value="美国英语" w={121} />
        <AaMark><sup>a</sup>a</AaMark>
        <Select label="消除锯齿" value="锐利" w={66} />
      </CharRow>
    </CharPanel>
  );
}

export default function App() {
  return (
    <>
      <Global />
      <Shell>
        <MenuBar>
          <Menus>{menus.map((m) => <MenuItem key={m}>{m}</MenuItem>)}</Menus>
          <WindowButtons>
            <WindowButton $w={28} aria-label="最小化"><Icon w={12} h={10} fill="currentColor"><path d="M1 6h10v3H1z" /></Icon></WindowButton>
            <WindowButton $w={27} aria-label="还原"><Icon w={13} h={10} sw={2}><path d="M5 4V1h7v5H8M1 4h6v5H1z" /></Icon></WindowButton>
            <WindowButton $w={46} aria-label="关闭"><Icon w={10} h={9} sw={2}><path d="M1 1l8 7M9 1L1 8" /></Icon></WindowButton>
          </WindowButtons>
        </MenuBar>
        <Options />
        <Body>
          <Workspace>
            <DocTabs role="tablist">
              <DocTab role="tab" $active>056, RGB/8#) *<Close /></DocTab>
              <DocTab role="tab">未标题-1 @ 66.7% (图层 6, RGB/8#) *<Close /></DocTab>
            </DocTabs>
            <CanvasRow>
              <Canvas><Document /></Canvas>
              <VScroll><ChevronUp /><FlexGap /><VThumb /><FlexGap /><Chevron /></VScroll>
            </CanvasRow>
            <StatusBar>
              <StatusText>像素 (72 ppi)<ChevronRight /></StatusText>
              <ChevronLeft />
              <FlexGap /><HThumb /><FlexGap />
              <IconGroup $right={24}><ChevronRight /></IconGroup>
            </StatusBar>
          </Workspace>
          <Dock>
            <Collapse><Icon w={10} h={6}><path d="M1 .5L4 3 1 5.500M6 .5L9 3 6 5.500" strokeWidth="1.300" /></Icon></Collapse>
            <Tabs names={['颜色', '色板', '渐变', '图案']} active="颜色" />
            <ColorSection />
            <Tabs names={['图层', '通道', '路径']} active="图层" h={31} line />
            <LayersSection />
            <Tabs names={['属性', '调整', '字符', '段落']} active="字符" h={30} line />
            <CharacterSection />
          </Dock>
        </Body>
      </Shell>
    </>
  );
}
